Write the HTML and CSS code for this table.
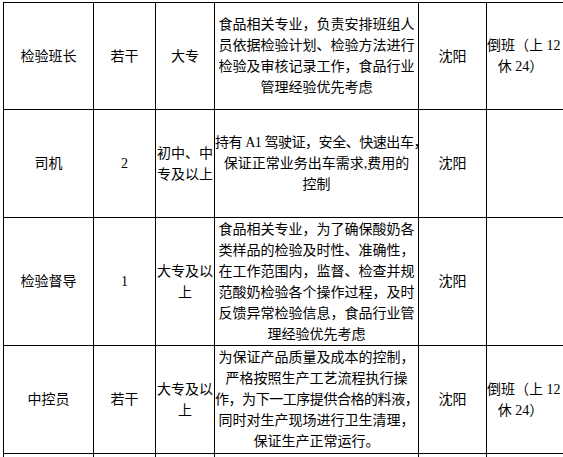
FILE: index.html
```html
<!DOCTYPE html>
<html lang="zh-CN">
<head>
<meta charset="utf-8">
<title>招聘岗位</title>
<link rel="stylesheet" href="styles.css">
</head>
<body>
<table class="jobs">
  <colgroup>
    <col class="c-name">
    <col class="c-num">
    <col class="c-edu">
    <col class="c-desc">
    <col class="c-city">
    <col class="c-note">
  </colgroup>
  <tbody>
    <tr class="r1">
      <td>检验班长</td>
      <td>若干</td>
      <td>大专</td>
      <td>食品相关专业，负责安排班组人<br>员依据检验计划、检验方法进行<br>检验及审核记录工作，食品行业<br>管理经验优先考虑</td>
      <td>沈阳</td>
      <td class="note">倒班（上 12<br>休 24）</td>
    </tr>
    <tr class="r2">
      <td>司机</td>
      <td>2</td>
      <td>初中、中<br>专及以上</td>
      <td><span class="tight">持有 A1 驾驶证，安全、快速出车，</span><br>保证正常业务出车需求,费用的<br>控制</td>
      <td>沈阳</td>
      <td class="note"></td>
    </tr>
    <tr class="r3">
      <td>检验督导</td>
      <td>1</td>
      <td>大专及以<br>上</td>
      <td>食品相关专业，为了确保酸奶各<br>类样品的检验及时性、准确性，<br>在工作范围内，监督、检查并规<br>范酸奶检验各个操作过程，及时<br>反馈异常检验信息，食品行业管<br>理经验优先考虑</td>
      <td>沈阳</td>
      <td class="note"></td>
    </tr>
    <tr class="r4">
      <td>中控员</td>
      <td>若干</td>
      <td>大专及以<br>上</td>
      <td>为保证产品质量及成本的控制，<br>严格按照生产工艺流程执行操<br><span class="tight">作，为下一工序提供合格的料液，</span><br>同时对生产现场进行卫生清理，<br>保证生产正常运行。</td>
      <td>沈阳</td>
      <td class="note">倒班（上 12<br>休 24）</td>
    </tr>
    <tr class="r5">
      <td></td><td></td><td></td><td></td><td></td><td class="note"></td>
    </tr>
  </tbody>
</table>
</body>
</html>
```

FILE: styles.css
```css
html, body {
  margin: 0;
  padding: 0;
  background: #ffffff;
}

body {
  padding: 2px 0 0 3px;
  overflow: hidden;
}

.jobs {
  border-collapse: collapse;
  table-layout: fixed;
  width: 561px;
  font-family: "Liberation Serif", "Noto Sans CJK SC", serif;
  font-size: 14px;
  line-height: 21px;
  color: #000;
}

.c-name { width: 90px; }
.c-num  { width: 62px; }
.c-edu  { width: 59px; }
.c-desc { width: 204px; }
.c-city { width: 68px; }
.c-note { width: 78px; }

.jobs td {
  border: 1px solid #000;
  padding: 0;
  text-align: center;
  vertical-align: middle;
  white-space: nowrap;
}

.jobs td.note {
  padding-right: 10px;
}

.r1 { height: 107px; }
.r2 { height: 108px; }
.r3 { height: 128px; }
.r4 { height: 108px; }
.r5 { height: 30px; }

.tight {
  letter-spacing: -0.45px;
}
```
